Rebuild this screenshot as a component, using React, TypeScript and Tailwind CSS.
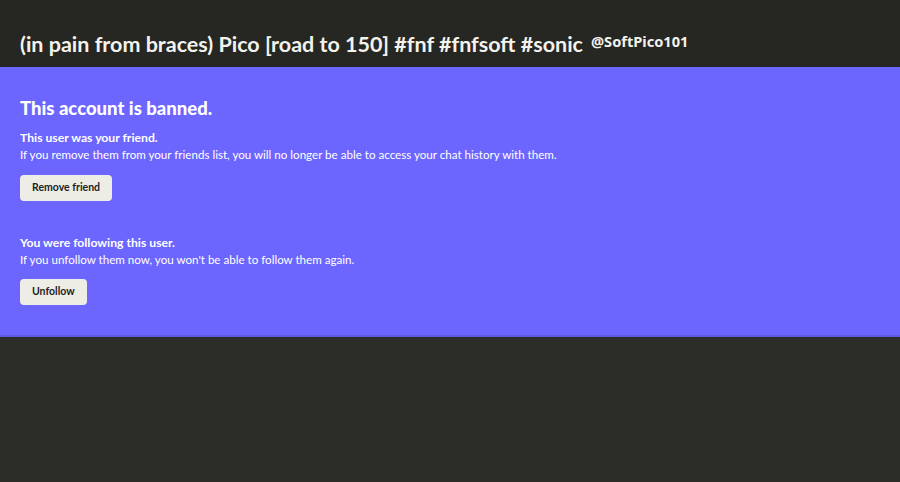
import React from "react";

export default function App() {
  return (
    <div className="w-[900px] h-[482px] bg-[#2c2c28] flex flex-col overflow-hidden">
      <div className="h-[67px] bg-[#262622] flex items-center pl-5 pt-[22px]">
        <h1 className="font-['Lato',sans-serif] font-bold text-[21.5px] leading-none text-[#f3f3ee]">
          (in pain from braces) Pico [road to 150] #fnf #fnfsoft #sonic
        </h1>
        <span className="ml-[8px] font-['Noto_Sans',sans-serif] font-bold text-[14.6px] leading-none text-[#f3f3ee] -translate-y-[3px]">
          @SoftPico101
        </span>
      </div>
      <div className="h-[270px] bg-[#6c66ff] border-b-2 border-[#5f5ae0] px-5 pt-[29px] font-['Lato',sans-serif] text-white">
        <h2 className="font-['Lato',sans-serif] font-black text-[18.5px] leading-[24px]">This account is banned.</h2>
        <p className="mt-[9px] font-bold text-[12.2px] leading-[17px]">This user was your friend.</p>
        <p className="text-[11.6px] leading-[17px]">
          If you remove them from your friends list, you will no longer be able to access your chat history with them.
        </p>
        <button className="mt-[12px] h-[26px] px-3 rounded-[4px] bg-[#edede6] text-[#222] font-bold text-[10.5px]">
          Remove friend
        </button>
        <p className="mt-[33px] font-bold text-[12.2px] leading-[17px]">You were following this user.</p>
        <p className="text-[11.6px] leading-[17px]">If you unfollow them now, you won't be able to follow them again.</p>
        <button className="mt-[11px] h-[26px] px-3 rounded-[4px] bg-[#edede6] text-[#222] font-bold text-[10.5px]">
          Unfollow
        </button>
      </div>
      <div className="flex-1" />
    </div>
  );
}
